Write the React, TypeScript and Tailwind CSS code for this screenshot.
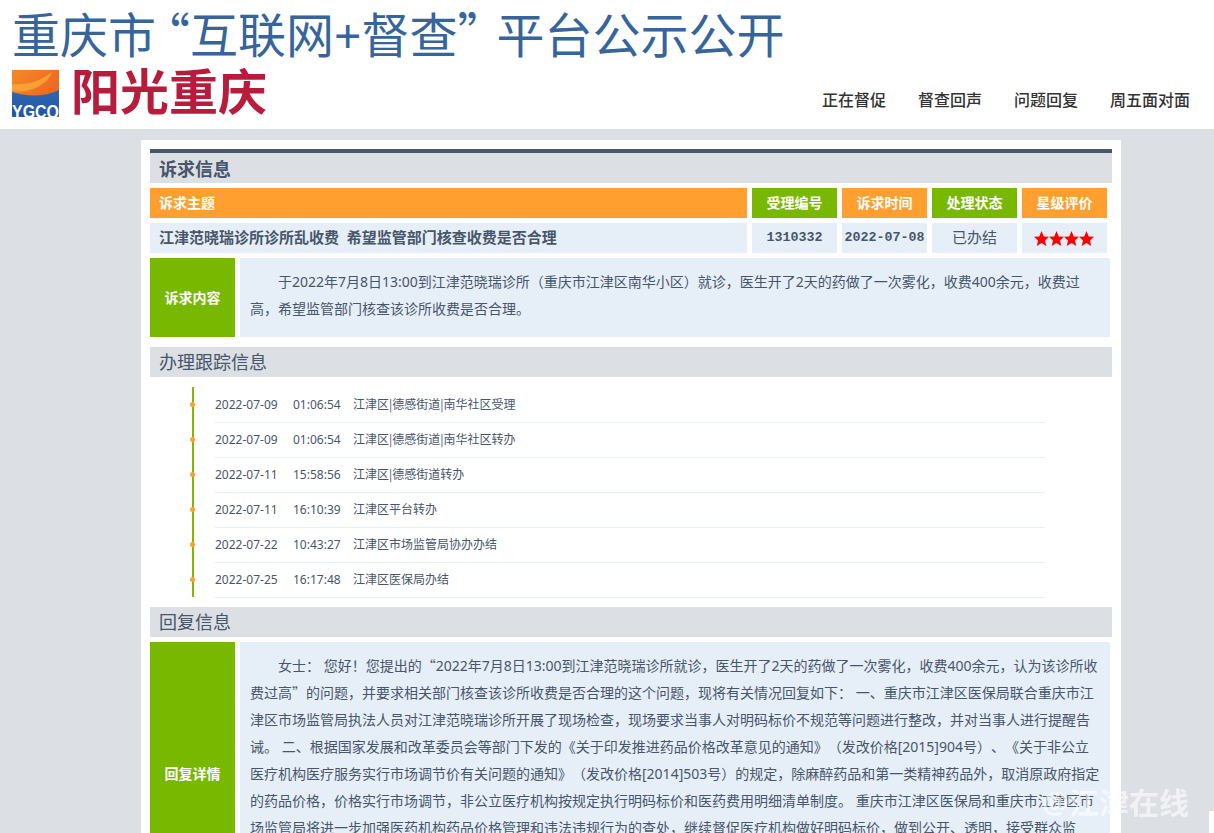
const trackItems = [
  ['2022-07-09', '01:06:54', '江津区|德感街道|南华社区受理'],
  ['2022-07-09', '01:06:54', '江津区|德感街道|南华社区转办'],
  ['2022-07-11', '15:58:56', '江津区|德感街道转办'],
  ['2022-07-11', '16:10:39', '江津区平台转办'],
  ['2022-07-22', '10:43:27', '江津区市场监管局协办办结'],
  ['2022-07-25', '16:17:48', '江津区医保局办结'],
];

const navItems = ['正在督促', '督查回声', '问题回复', '周五面对面'];

const cjkQuote = "font-['Noto_Sans_CJK_SC',sans-serif]";

const replyLines = [
  <>女士： 您好！您提出的<span className={cjkQuote}>“</span>2022年7月8日13:00到江津范晓瑞诊所就诊，医生开了2天的药做了一次雾化，收费400余元，认为该诊所收</>,
  <>费过高<span className={cjkQuote}>”</span>的问题，并要求相关部门核查该诊所收费是否合理的这个问题，现将有关情况回复如下： 一、重庆市江津区医保局联合重庆市江</>,
  <>津区市场监管局执法人员对江津范晓瑞诊所开展了现场检查，现场要求当事人对明码标价不规范等问题进行整改，并对当事人进行提醒告</>,
  <>诫。 二、根据国家发展和改革委员会等部门下发的《关于印发推进药品价格改革意见的通知》（发改价格[2015]904号）、《关于非公立</>,
  <>医疗机构医疗服务实行市场调节价有关问题的通知》（发改价格[2014]503号）的规定，除麻醉药品和第一类精神药品外，取消原政府指定</>,
  <>的药品价格，价格实行市场调节，非公立医疗机构按规定执行明码标价和医药费用明细清单制度。 重庆市江津区医保局和重庆市江津区市</>,
  <>场监管局将进一步加强医药机构药品价格管理和违法违规行为的查处，继续督促医疗机构做好明码标价，做到公开、透明，接受群众监</>,
  <>督。</>,
];

const Logo = () => (
  <svg width="47" height="47" viewBox="0 0 47 47" className="shrink-0">
    <defs>
      <linearGradient id="sun" x1="0" y1="0" x2="1" y2="0.5">
        <stop offset="0" stopColor="#f58a26" />
        <stop offset="1" stopColor="#ee6a20" />
      </linearGradient>
      <linearGradient id="sea" x1="0" y1="0" x2="0" y2="1">
        <stop offset="0" stopColor="#3f74b8" />
        <stop offset="1" stopColor="#1f55a5" />
      </linearGradient>
    </defs>
    <rect width="47" height="47" rx="1" fill="url(#sea)" />
    <path d="M0 1Q0 0 1 0H46Q47 0 47 1V20C32 27 16 27 0 22Z" fill="url(#sun)" />
    <path d="M0 14C14 15 28 12 40 2C36 14 18 24 0 21Z" fill="#fbac3c" opacity="0.75" />
    <text x="0" y="48" fill="#fff" fontSize="18" fontWeight="700" fontFamily="'Liberation Sans',sans-serif" textLength="47" lengthAdjust="spacingAndGlyphs">YGCQ</text>
  </svg>
);

const SectionTitle = ({ children }: { children: React.ReactNode }) => (
  <div className="h-[30px] bg-[#dcdfe4] pl-[9px] text-[18px] leading-[30px] text-[#47566b]">{children}</div>
);

const Cell = ({ className, children }: { className: string; children: React.ReactNode }) => (
  <div className={`flex h-[30px] items-center pb-[1px] ${className}`}>{children}</div>
);

const App = () => {
  return (
    <div className="relative h-[833px] overflow-hidden bg-[#dcdfe4] font-['Noto_Sans','Noto_Sans_CJK_SC',sans-serif] [text-spacing-trim:space-all]">
      {/* header */}
      <header className="h-[129px] bg-white pl-[12px]">
        <h1 className="h-[66px] pt-[1px] text-[48px] leading-[62px] font-normal whitespace-nowrap text-[#36659b]">
          重庆市<span className={`-ml-[14px] ${cjkQuote}`}>“</span>互联网+督查<span className={`-mr-[9px] ${cjkQuote}`}>”</span>平台公示公开
        </h1>
        <div className="flex items-start justify-between pr-[24px]">
          <div className="flex items-start gap-[12px] pt-[4px]">
            <Logo />
            <div className="-mt-[2px] text-[49px] leading-[47px] font-bold text-[#b81c3c]">阳光重庆</div>
          </div>
          <nav className="flex gap-[32px] pt-[22px] text-[16px] leading-[24px] font-medium text-[#333333]">
            {navItems.map((item) => (
              <span key={item}>{item}</span>
            ))}
          </nav>
        </div>
      </header>

      {/* main card */}
      <main className="mt-[11px] ml-[141px] w-[980px] bg-white px-[9px] pt-[9px]">
        <div className="h-[34px] border-t-4 border-[#47566b] bg-[#dcdfe4] pl-[9px] text-[18px] leading-[32px] font-bold text-[#47566b]">诉求信息</div>

        <div className="mt-[5px] grid grid-cols-[597px_85px_85px_85px_85px] gap-[5px] text-[14px] font-bold text-white">
          <Cell className="bg-[#ff9f2f] pl-[9px]">诉求主题</Cell>
          <Cell className="justify-center bg-[#78b800]">受理编号</Cell>
          <Cell className="justify-center bg-[#ff9f2f]">诉求时间</Cell>
          <Cell className="justify-center bg-[#78b800]">处理状态</Cell>
          <Cell className="justify-center bg-[#ff9f2f]">星级评价</Cell>
          <Cell className="bg-[#e6eef8] pl-[9px] text-[15px] text-[#47566b]">江津范晓瑞诊所诊所乱收费&nbsp;&nbsp;希望监管部门核查收费是否合理</Cell>
          <Cell className="justify-center bg-[#e6eef8] font-['Liberation_Mono',monospace] text-[13.33px] text-[#47566b]">1310332</Cell>
          <Cell className="justify-center bg-[#e6eef8] font-['Liberation_Mono',monospace] text-[13.33px] text-[#47566b]">2022-07-08</Cell>
          <Cell className="justify-center bg-[#e6eef8] text-[15px] font-normal text-[#47566b]">已办结</Cell>
          <Cell className="justify-center bg-[#e6eef8]">
            <span className="flex -translate-x-[1px] translate-y-[1px]">
              {[0, 1, 2, 3].map((i) => (
                <svg key={i} width="15" height="15" viewBox="0 0 24 24" fill="#ff0000">
                  <path d="M12 0l3.600 8.600 8.400.700-6.400 5.700 2 8.900L12 19l-7.600 5 2-8.900L0 9.300l8.400-.7z" />
                </svg>
              ))}
            </span>
          </Cell>
        </div>

        <div className="mt-[5px] flex h-[79px] gap-[5px]">
          <div className="flex w-[85px] shrink-0 items-center justify-center bg-[#78b800] text-[14px] font-bold text-white">诉求内容</div>
          <div className="w-[870px] bg-[#e6eef8] px-[10px] py-[10px] indent-[28px] text-[14px] leading-[27px] text-[#47566b]">
            于2022年7月8日13:00到江津范晓瑞诊所（重庆市江津区南华小区）就诊，医生开了2天的药做了一次雾化，收费400余元，收费过高，希望监管部门核查该诊所收费是否合理。
          </div>
        </div>

        <div className="mt-[10px]">
          <SectionTitle>办理跟踪信息</SectionTitle>
        </div>
        <div className="mt-[10px] ml-[42px] h-[210px] w-[853px] border-l-2 border-[#82b900] pt-[1px] pl-[21px]">
          {trackItems.map(([date, time, text]) => (
            <div key={date + time + text} className="relative flex h-[35px] items-center border-b border-[#e6eef8] pb-[1px] text-[12px] text-[#47566b]">
              <span className="absolute top-[14px] -left-[25px] h-[5px] w-[5px] rounded-full bg-[#ff9f2f]" />
              <span className="w-[78px]">{date}</span>
              <span className="w-[60px]">{time}</span>
              <span className="mb-[2px] font-['Noto_Sans_CJK_SC',sans-serif]">{text}</span>
            </div>
          ))}
        </div>

        <div className="mt-[10px]">
          <SectionTitle>回复信息</SectionTitle>
        </div>
        <div className="mt-[5px] flex h-[262px] gap-[5px]">
          <div className="flex w-[85px] shrink-0 items-center justify-center bg-[#78b800] text-[14px] font-bold text-white">回复详情</div>
          <div className="w-[870px] bg-[#e6eef8] px-[10px] py-[10px] text-[14px] leading-[27px] text-[#47566b]">
            {replyLines.map((line, i) => (
              <div key={i} className={`whitespace-nowrap ${i === 0 ? 'indent-[28px]' : ''}`}>{line}</div>
            ))}
          </div>
        </div>
      </main>

      {/* watermark */}
      <div className="absolute top-[785px] left-[1042px] text-[30px] leading-[36px] font-bold whitespace-nowrap text-white/60 blur-[0.5px]">@江津在线</div>
      <div className="absolute right-0 bottom-0 h-[22px] w-[5px] bg-white" />
    </div>
  );
};

export default App;
